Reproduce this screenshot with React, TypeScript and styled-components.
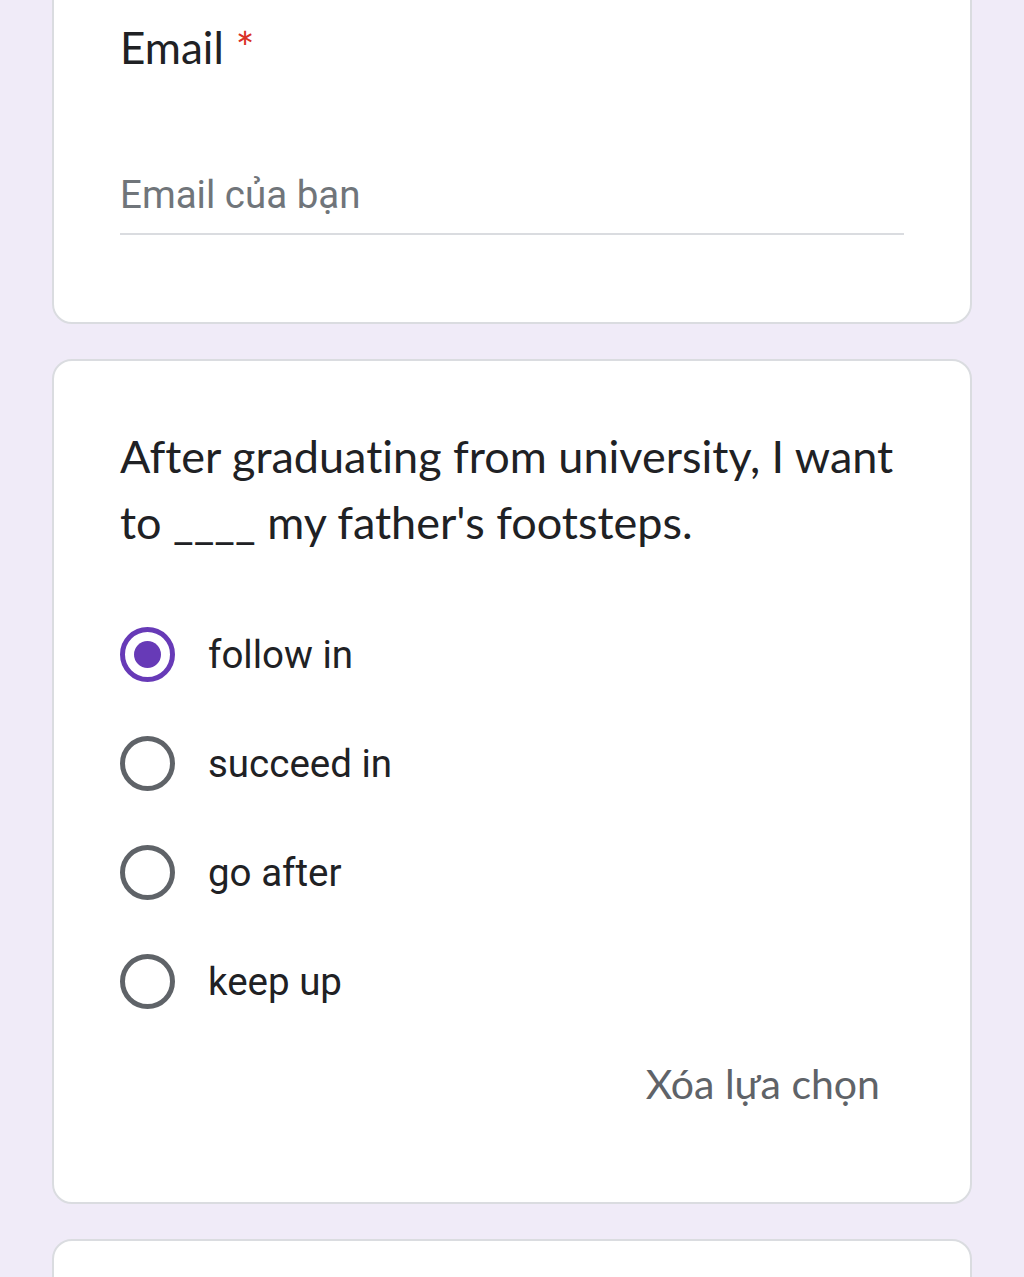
import React, {useState} from 'react';
import styled, {createGlobalStyle} from 'styled-components';

const GlobalStyle = createGlobalStyle`
  html, body {
    margin: 0;
    padding: 0;
    background: #f0ebf8;
    overflow: hidden;
  }
`;

const Page = styled.div`
  display: flex;
  flex-direction: column;
  gap: 35px;
  padding: 0 52px;
  margin-top: -40px;
  height: 1317px;
`;

const Card = styled.div<{$pad?: string}>`
  background: #fff;
  border: 2px solid #dadce0;
  border-radius: 20px;
  padding: ${p => p.$pad || '66px'};
  flex-shrink: 0;
`;

const Label = styled.div`
  font-family: Lato, "Open Sans", sans-serif;
  font-size: 44px;
  color: #202124;
  line-height: 66px;
`;

const Star = styled.span`
  color: #d93025;
  margin-left: 12px;
`;

const Input = styled.input`
  display: block;
  width: 100%;
  box-sizing: border-box;
  margin-top: 92px;
  border: none;
  border-bottom: 2px solid #dadce0;
  padding: 0 0 16px;
  font-family: Roboto, sans-serif;
  font-size: 38.5px;
  color: #202124;
  outline: none;
  background: transparent;

  &::placeholder {
    color: #70757a;
  }
`;

const Question = styled.div`
  font-family: Lato, "Open Sans", sans-serif;
  font-size: 45px;
  font-variant-ligatures: none;
  line-height: 66px;
  color: #202124;
  margin-bottom: 72px;
`;

const Options = styled.div`
  display: flex;
  flex-direction: column;
  gap: 54px;
`;

const Option = styled.label`
  display: flex;
  align-items: center;
  gap: 33px;
  cursor: pointer;
  font-family: Roboto, sans-serif;
  font-size: 38.5px;
  color: #202124;
  height: 55px;
`;

const Radio = styled.span<{$checked: boolean}>`
  width: 55px;
  height: 55px;
  box-sizing: border-box;
  border-radius: 50%;
  border: 5.5px solid ${p => (p.$checked ? '#673ab7' : '#5f6368')};
  display: flex;
  align-items: center;
  justify-content: center;
  flex-shrink: 0;

  &::after {
    content: '';
    width: 27px;
    height: 27px;
    border-radius: 50%;
    background: #673ab7;
    display: ${p => (p.$checked ? 'block' : 'none')};
  }
`;

const Footer = styled.div`
  display: flex;
  justify-content: flex-end;
  margin-top: 38px;
`;

const ClearButton = styled.button`
  border: none;
  background: none;
  font-family: Lato, "Open Sans", sans-serif;
  font-size: 41px;
  color: #5f6368;
  padding: 12px 24px;
  cursor: pointer;
`;

const options = ['follow in', 'succeed in', 'go after', 'keep up'];

export default function App() {
    const [selected, setSelected] = useState(0);

    return (
        <>
            <GlobalStyle/>
            <Page>
                <Card $pad="52px 66px 87px">
                    <Label>Email<Star>*</Star></Label>
                    <Input placeholder="Email của bạn"/>
                </Card>

                <Card $pad="62px 66px 82px">
                    <Question>
                        After graduating from university, I want to ____ my father's footsteps.
                    </Question>
                    <Options>
                        {options.map((opt, i) => (
                            <Option key={opt} onClick={() => setSelected(i)}>
                                <Radio $checked={selected === i}/>
                                {opt}
                            </Option>
                        ))}
                    </Options>
                    <Footer>
                        <ClearButton onClick={() => setSelected(-1)}>Xóa lựa chọn</ClearButton>
                    </Footer>
                </Card>

                <Card $pad="66px">
                    <Question>&nbsp;</Question>
                </Card>
            </Page>
        </>
    );
}
